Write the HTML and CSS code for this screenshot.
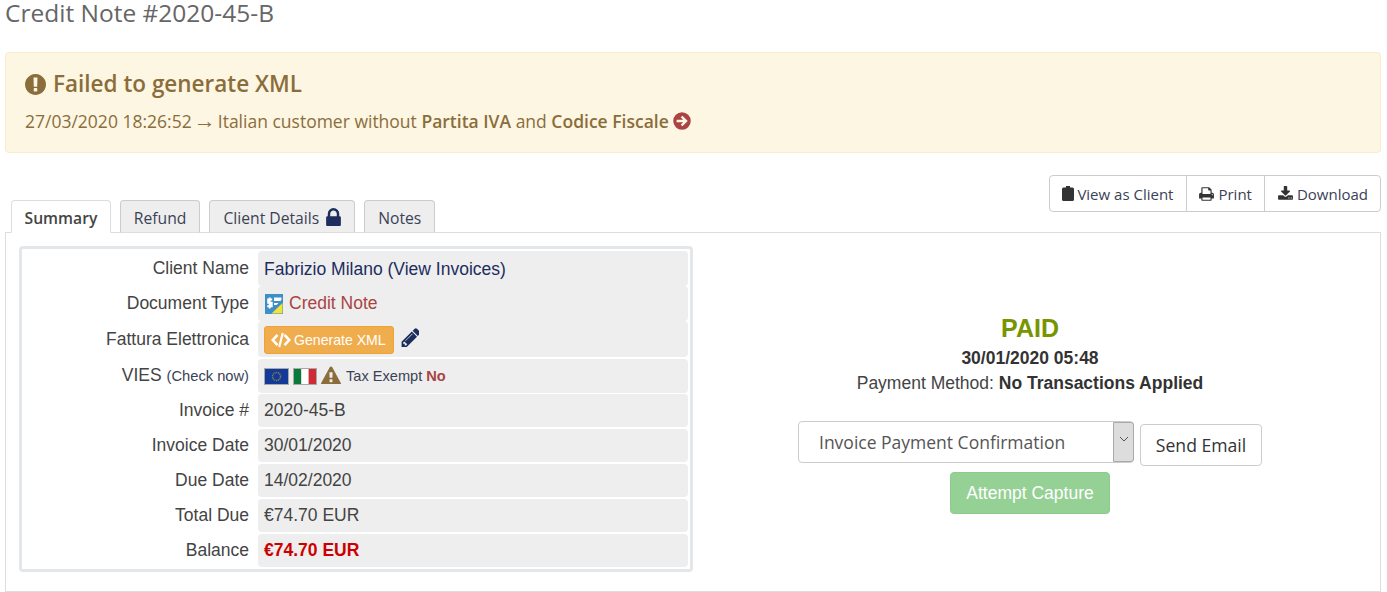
FILE: index.html
```html
<!DOCTYPE html>
<html lang="en">
<head>
<meta charset="utf-8">
<title>Credit Note #2020-45-B</title>
<link rel="stylesheet" href="styles.css">
</head>
<body>
<main class="page">
  <h1 class="title">Credit Note #2020-45-B</h1>

  <section class="alert">
    <h2 class="alert-head">
      <svg class="ic-alert" viewBox="128 128 1536 1536"><path d="M896 128q209 0 385.500 103t279.500 279.500 103 385.500-103 385.500-279.500 279.500-385.500 103-385.500-103-279.500-279.500-103-385.500 103-385.500 279.500-279.500 385.500-103zm128 1247v-190q0-14-9-23.500t-22-9.500h-192q-13 0-23 10t-10 23v190q0 13 10 23t23 10h192q13 0 22-9.500t9-23.500zm-2-344l18-621q0-12-10-18-10-8-24-8h-220q-14 0-24 8-10 6-10 18l17 621q0 10 10 17.500t24 7.500h185q14 0 23.500-7.500t10.500-17.500z"/></svg>
      Failed to generate XML
    </h2>
    <p class="alert-text">27/03/2020 18:26:52 <span class="arrow">→</span> Italian customer without <b>Partita IVA</b> and <b>Codice Fiscale</b>
      <svg class="ic-go" viewBox="0 0 24 24"><path fill-rule="evenodd" d="M12 1.500a10.500 10.500 0 1 0 0 21 10.500 10.500 0 0 0 0-21zM12.500 5.600l6.400 6.400-6.400 6.400-2-2 2.900-2.900H5.500v-3h7.900l-2.900-2.900z"/></svg>
    </p>
  </section>

  <div class="tabbar">
    <nav class="tabs">
      <a class="tab active">Summary</a>
      <a class="tab">Refund</a>
      <a class="tab">Client Details
        <svg class="ic-lock" viewBox="0 0 1152 1408"><path d="M320 640h512v-192q0-106-75-181t-181-75-181 75-75 181v192zm832 96v576q0 40-28 68t-68 28h-960q-40 0-68-28t-28-68v-576q0-40 28-68t68-28h32v-192q0-184 132-316t316-132 316 132 132 316v192h32q40 0 68 28t28 68z"/></svg>
      </a>
      <a class="tab">Notes</a>
    </nav>
    <div class="actions">
      <a class="action action-client">
        <svg class="ic-clip" viewBox="0 0 12 15"><path d="M4 0h4v1.500h2.500A1.500 1.500 0 0 1 12 3v10.500a1.500 1.500 0 0 1-1.500 1.500h-9A1.500 1.500 0 0 1 0 13.500V3a1.500 1.500 0 0 1 1.500-1.500H4z"/></svg>
        View as Client</a>
      <a class="action">
        <svg class="ic-act" viewBox="0 0 1664 1792"><path d="M384 1536h896v-256h-896v256zm0-640h896v-384h-160q-40 0-68-28t-28-68v-160h-640v640zm1152 64q0-26-19-45t-45-19-45 19-19 45 19 45 45 19 45-19 19-45zm128 0v416q0 13-9.500 22.500t-22.500 9.500h-224v160q0 40-28 68t-68 28h-960q-40 0-68-28t-28-68v-160h-224q-13 0-22.500-9.500t-9.500-22.500v-416q0-79 56.500-135.500t135.500-56.500h64v-544q0-40 28-68t68-28h672q40 0 88 20t76 48l152 152q28 28 48 76t20 88v256h64q79 0 135.500 56.500t56.500 135.500z"/></svg>
        Print</a>
      <a class="action action-last">
        <svg class="ic-act" viewBox="0 0 1664 1792"><path d="M1344 1344q0-26-19-45t-45-19-45 19-19 45 19 45 45 19 45-19 19-45zm256 0q0-26-19-45t-45-19-45 19-19 45 19 45 45 19 45-19 19-45zm128-224v320q0 40-28 68t-68 28h-1472q-40 0-68-28t-28-68v-320q0-40 28-68t68-28h465l135 136q58 56 136 56t136-56l136-136h464q40 0 68 28t28 68zm-325-569q17 41-14 70l-448 448q-18 19-45 19t-45-19l-448-448q-31-29-14-70 17-39 59-39h256v-448q0-26 19-45t45-19h256q26 0 45 19t19 45v448h256q42 0 59 39z" transform="translate(-64 0)"/></svg>
        Download</a>
    </div>
  </div>

  <section class="panel">
    <div class="details">
      <div class="row nudge"><div class="label">Client Name</div><div class="value link">Fabrizio Milano (View Invoices)</div></div>
      <div class="row nudge"><div class="label">Document Type</div><div class="value credit">
        <svg class="ic-doc" viewBox="0 0 18 20"><rect width="18" height="20" fill="#3d8fc6"/><path d="M6.500 19.500L17.500 9v10.500z" fill="#f6e03a"/><path d="M9 3.500h7.500v2.200L15.500 7H9zM9 9h4.500L11.500 11H9z" fill="#fff"/><path d="M7.200 5.500H3.200v3.300h3.500v3.500H2.200M4.700 3.500v11" fill="none" stroke="#fff" stroke-width="2"/></svg>
        Credit Note</div></div>
      <div class="row tall"><div class="label">Fattura Elettronica</div><div class="value">
        <a class="btn-xml"><svg class="ic-code" viewBox="0 0 20 16"><path d="M6.500 2.800L1.800 8l4.700 5.200M13.500 2.800L18.200 8l-4.700 5.200" fill="none" stroke="#fff" stroke-width="2.600"/><path d="M11.800 1L8.200 15" fill="none" stroke="#fff" stroke-width="2.200"/></svg>Generate XML</a>
        <svg class="ic-pen" viewBox="0 128 1536 1536"><path d="M491 1536l91-91-235-235-91 91v107h128v128h107zm523-928q0-22-22-22-10 0-17 7l-542 542q-7 7-7 17 0 22 22 22 10 0 17-7l542-542q7-7 7-17zm-54-192l416 416-832 832h-416v-416zm683 96q0 53-37 90l-166 166-416-416 166-165q36-38 90-38 53 0 91 38l235 234q37 39 37 91z"/></svg>
      </div></div>
      <div class="row"><div class="label">VIES <small class="check">(Check now)</small></div><div class="value vies">
        <svg class="flag" viewBox="0 0 25 17"><rect width="25" height="17" fill="#a9a9a9"/><rect x="1" y="1" width="23" height="15" fill="#123a96"/><circle cx="12.500" cy="8.500" r="4" fill="none" stroke="#7d7d55" stroke-width="1.500" stroke-dasharray="1.200 .6"/></svg>
        <svg class="flag flag-it" viewBox="0 0 24 17"><rect width="24" height="17" fill="#a9a9a9"/><rect x="1" y="1" width="7.300" height="15" fill="#0a7a3c"/><rect x="8.300" y="1" width="7.400" height="15" fill="#fff"/><rect x="15.700" y="1" width="7.300" height="15" fill="#cf2b37"/></svg>
        <svg class="ic-warn" viewBox="0 128 1792 1536"><path d="M1024 1375v-190q0-14-9.500-23.500t-22.500-9.500h-192q-13 0-22.500 9.500t-9.500 23.500v190q0 14 9.500 23.500t22.500 9.500h192q13 0 22.500-9.500t9.500-23.500zm-2-374l18-459q0-12-10-19-13-11-24-11h-220q-11 0-24 11-10 7-10 21l17 457q0 10 10 16.500t24 6.500h185q14 0 23.500-6.500t10.500-16.500zm-14-934l768 1408q35 63-2 126-17 29-46.500 46t-63.500 17h-1536q-34 0-63.500-17t-46.500-46q-37-63-2-126l768-1408q17-31 47-49t65-18 65 18 47 49z" transform="translate(0 128)"/></svg>
        <span class="exempt">Tax Exempt <b class="no">No</b></span>
      </div></div>
      <div class="row"><div class="label">Invoice #</div><div class="value">2020-45-B</div></div>
      <div class="row"><div class="label">Invoice Date</div><div class="value">30/01/2020</div></div>
      <div class="row"><div class="label">Due Date</div><div class="value">14/02/2020</div></div>
      <div class="row"><div class="label">Total Due</div><div class="value">€74.70 EUR</div></div>
      <div class="row"><div class="label">Balance</div><div class="value balance">€74.70 EUR</div></div>
    </div>

    <div class="status">
      <div class="paid">PAID</div>
      <div class="paid-date">30/01/2020 05:48</div>
      <div class="method">Payment Method: <b>No Transactions Applied</b></div>
      <form class="email-row">
        <div class="select-wrap">
          <select class="select"><option>Invoice Payment Confirmation</option></select>
          <span class="select-arrow"><svg viewBox="0 0 10 6"><path d="M1 1l4 4 4-4" fill="none" stroke="#555" stroke-width="1"/></svg></span>
        </div>
        <button type="button" class="send">Send Email</button>
      </form>
      <button type="button" class="capture" disabled>Attempt Capture</button>
    </div>
  </section>
</main>
</body>
</html>
```

FILE: styles.css
```css
* { box-sizing: border-box; }
html, body { margin: 0; padding: 0; background: #fff; }
body { font-family: "Open Sans", sans-serif; color: #333; overflow: hidden; }
.page { width: 1387px; height: 592px; padding: 0 6px 0 5px; overflow: hidden; }

.title { margin: 0; height: 26px; font-size: 24.500px; line-height: 26px; font-weight: 400; color: #666; }

.alert { margin-top: 26px; height: 101px; padding: 18px 19px 0; background: #fdf6e3; border: 1px solid #faebcc; border-radius: 4px; color: #8a6d3b; }
.alert-head { margin: 0; display: flex; align-items: center; gap: 7px; height: 26px; font-size: 22.500px; line-height: 26px; font-weight: 600; }
.ic-alert { width: 21px; height: 21px; fill: #8a6d3b; flex: none; }
.alert-text { margin: 11px 0 0; font-size: 17.500px; line-height: 26px; }
.alert-text b { font-weight: 600; }
.arrow { font-family: "Liberation Sans", Arial, sans-serif; font-size: 22px; line-height: 20px; margin: 0 -2.500px; }
.ic-go { width: 20px; height: 20px; fill: #a94442; vertical-align: -3px; margin-left: -1px; }

.tabbar { margin-top: 22px; height: 57px; display: flex; justify-content: space-between; align-items: flex-start; }
.tabs { align-self: flex-end; display: flex; gap: 9px; margin-left: 6px; margin-bottom: -1px; position: relative; z-index: 1; }
.tab { height: 33px; padding: 2px 13px 0; display: flex; align-items: center; gap: 7px; font-size: 15.700px; color: #3a4256; background: #eee; border: 1px solid #ccc; border-bottom-color: #ddd; border-radius: 4px 4px 0 0; }
.tab.active { padding: 2px 12.500px 0; background: #fff; border-color: #ddd; border-bottom-color: #fff; font-weight: 600; color: #444; }
.ic-lock { width: 15px; height: 18px; fill: #1c2d5e; margin-top: -2px; }

.actions { display: flex; height: 37px; border: 1px solid #ccc; border-radius: 4px; background: #fff; }
.action { display: flex; align-items: center; gap: 4px; padding: 0 12px; font-size: 15px; color: #3a4256; border-left: 1px solid #ccc; }
.action-client { gap: 3px; padding: 0 13px 0 12px; border-left: 0; }
.action-last { padding-left: 13px; }
.ic-clip { width: 12px; height: 15px; fill: #333; }
.ic-act { width: 15px; height: 16px; fill: #333; }

.panel { height: 360px; padding: 13px; display: grid; grid-template-columns: 674px 674px; border: 1px solid #ddd; }
.details { height: 326px; padding: 2px 2px 0; border: 3px solid #e3e7ea; border-radius: 4px; display: flex; flex-direction: column; gap: 2px; font-family: "Liberation Sans", Arial, sans-serif; font-size: 17.500px; }
.row { display: grid; grid-template-columns: 234px 1fr; height: 33px; flex: none; }
.row.tall { height: 36px; }
.label { padding-right: 9px; text-align: right; line-height: 33px; color: #444; white-space: nowrap; }
.row.tall .label { line-height: 36px; }
.row.nudge .label { line-height: 35px; }
.row.nudge .value { padding-top: 1px; }
.check { font-size: 14.700px; color: #3a4256; }
.value { display: flex; align-items: center; gap: 6px; padding-left: 6px; background: #eee; border-radius: 4px; color: #444; }
.link { color: #1c2d5e; }
.row.nudge .credit { color: #a94442; gap: 6px; padding-left: 7px; padding-top: 0; }
.balance { color: #c00; font-weight: 700; }
.ic-doc { width: 18px; height: 20px; flex: none; }
.btn-xml { display: flex; align-items: center; height: 28px; margin-top: 1px; padding: 0 7px 0 6px; gap: 3px; font-size: 14.100px; color: #fff; background: #f0ad4e; border: 1px solid #eea236; border-radius: 3px; }
.ic-code { width: 20px; height: 16px; }
.ic-pen { width: 19px; height: 19px; fill: #1c2d5e; margin-top: -4px; }
.vies { gap: 4px; }
.flag { width: 25px; height: 17px; flex: none; }
.flag-it { width: 24px; }
.ic-warn { width: 20px; height: 18px; fill: #8a6d3b; flex: none; margin-top: -2px; }
.exempt { font-size: 14.600px; margin-left: 1px; color: #3a4256; }
.no { color: #a94442; }

.status { display: flex; flex-direction: column; align-items: center; padding-top: 68px; font-family: "Liberation Sans", Arial, sans-serif; color: #333; }
.paid { font-size: 25px; line-height: 28px; font-weight: 700; color: #779500; }
.paid-date { font-size: 17.500px; line-height: 30px; margin-top: 1px; font-weight: 700; }
.method { font-size: 17.500px; line-height: 20px; color: #444; }
.method b { color: #333; }
.email-row { display: flex; align-items: flex-start; gap: 6px; margin-top: 28px; }
.select-wrap { position: relative; width: 336px; height: 42px; }
.select { width: 100%; height: 42px; padding: 0 20px; appearance: none; -webkit-appearance: none; font-family: "Open Sans", sans-serif; font-size: 17.500px; color: #555; background: #fff; border: 1px solid #ccc; border-radius: 4px; }
.select-arrow { position: absolute; top: 1px; right: 0; width: 21px; height: 40px; display: flex; align-items: center; justify-content: center; background: #ddd; border: 1px solid #aaa; border-radius: 0 3px 3px 0; }
.select-arrow svg { width: 10px; height: 6px; margin-top: -6px; }
.send { width: 122px; height: 42px; margin-top: 3px; padding: 0; font-family: "Open Sans", sans-serif; font-size: 17.600px; color: #333; background: #fff; border: 1px solid #ccc; border-radius: 4px; }
.capture { width: 160px; height: 42px; margin-top: 6px; padding: 0; font-family: "Liberation Sans", Arial, sans-serif; font-size: 17.500px; color: #fff; background: #95d095; border: 1px solid #8ccb8c; border-radius: 4px; }
```
